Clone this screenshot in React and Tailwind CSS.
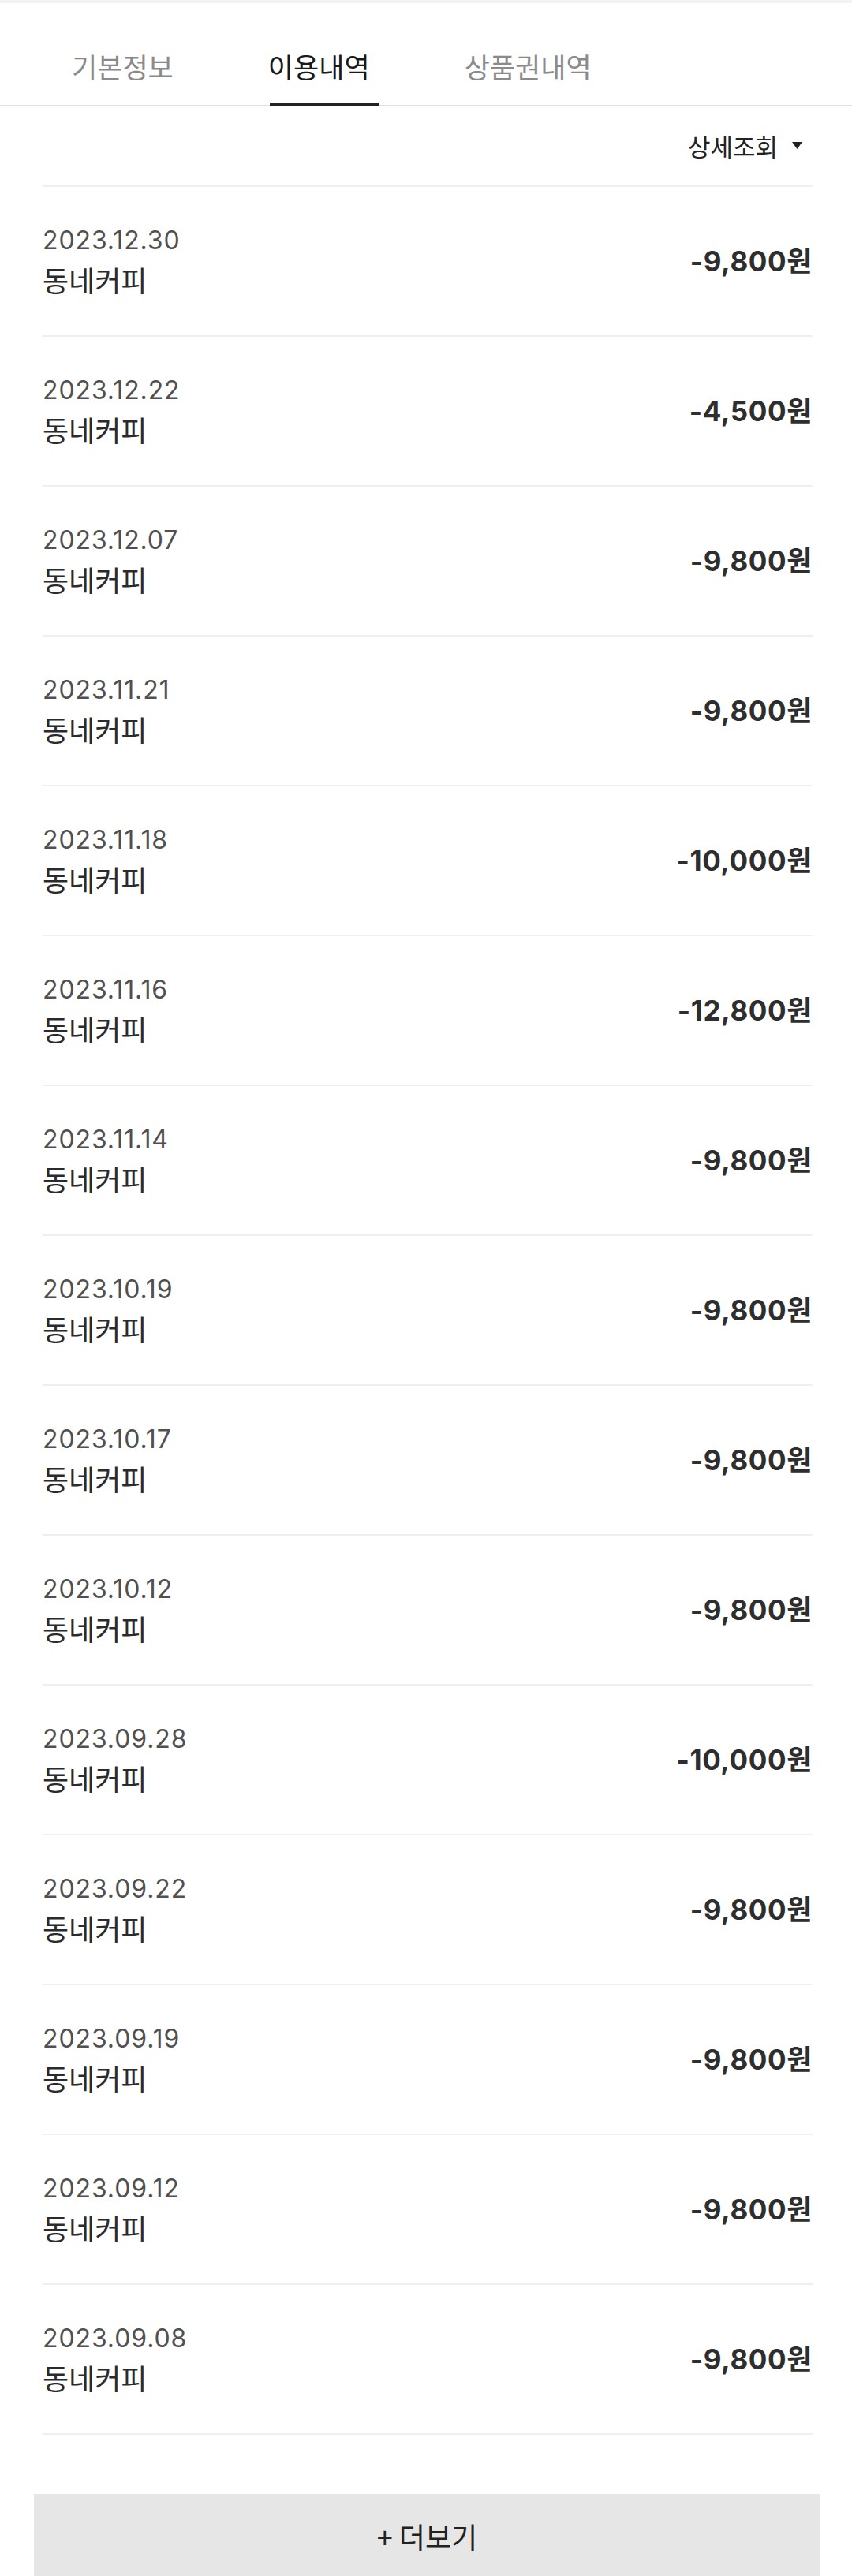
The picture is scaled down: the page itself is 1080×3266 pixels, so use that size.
import React from 'react';

const tabs = ['기본정보', '이용내역', '상품권내역'];

const history = [
  { date: '2023.12.30', store: '동네커피', amount: '-9,800원' },
  { date: '2023.12.22', store: '동네커피', amount: '-4,500원' },
  { date: '2023.12.07', store: '동네커피', amount: '-9,800원' },
  { date: '2023.11.21', store: '동네커피', amount: '-9,800원' },
  { date: '2023.11.18', store: '동네커피', amount: '-10,000원' },
  { date: '2023.11.16', store: '동네커피', amount: '-12,800원' },
  { date: '2023.11.14', store: '동네커피', amount: '-9,800원' },
  { date: '2023.10.19', store: '동네커피', amount: '-9,800원' },
  { date: '2023.10.17', store: '동네커피', amount: '-9,800원' },
  { date: '2023.10.12', store: '동네커피', amount: '-9,800원' },
  { date: '2023.09.28', store: '동네커피', amount: '-10,000원' },
  { date: '2023.09.22', store: '동네커피', amount: '-9,800원' },
  { date: '2023.09.19', store: '동네커피', amount: '-9,800원' },
  { date: '2023.09.12', store: '동네커피', amount: '-9,800원' },
  { date: '2023.09.08', store: '동네커피', amount: '-9,800원' },
];

export default function App() {
  const active = 1;

  return (
    <div className="w-[1080px] bg-white font-['Inter','Noto_Sans_CJK_KR',sans-serif]">
      <div className="h-[4px] bg-[#f3f3f3]" />

      {/* Tabs */}
      <div className="h-[131px] border-b-2 border-[#e3e3e3] flex items-start pl-[91px] gap-[120px] pt-[58px]">
        {tabs.map((tab, i) => (
          <div key={tab} className="relative h-[71px]">
            <span
              className={`block text-[35px] leading-[44px] font-['Noto_Sans_CJK_KR',sans-serif] ${
                i === active ? 'text-[#1a1a1a]' : 'text-[#8a8a8a]'
              }`}
            >
              {tab}
            </span>
            {i === active && (
              <span className="absolute left-[2px] bottom-[-2px] w-[139px] h-[5px] bg-[#222]" />
            )}
          </div>
        ))}
      </div>

      {/* Filter */}
      <div className="h-[100px] flex items-center justify-end pr-[63px]">
        <button className="flex items-center gap-[18px] text-[#222]">
          <span className="text-[31px] leading-[36px] font-['Noto_Sans_CJK_KR',sans-serif]">상세조회</span>
          <svg className="w-[13px] h-[10px]" viewBox="0 0 13 10" fill="currentColor">
            <path d="M0 0h13L6.5 9z" />
          </svg>
        </button>
      </div>

      {/* List */}
      <div className="ml-[54px] mr-[50px] border-t-2 border-[#efefef]">
        {history.map((item, i) => (
          <div
            key={i}
            className="h-[190px] border-b-2 border-[#efefef] flex items-center justify-between"
          >
            <div className="flex flex-col">
              <span className="text-[32px] leading-[40px] text-[#505050] tracking-[0.9px]">{item.date}</span>
              <span className="mt-[6px] text-[36px] leading-[46px] text-[#2b2b2b] font-['Noto_Sans_CJK_KR',sans-serif]">
                {item.store}
              </span>
            </div>
            <span className="text-[35px] leading-[40px] font-bold text-[#2e2e2e] tracking-[0.6px]">
              {item.amount}
            </span>
          </div>
        ))}
      </div>

      <div className="h-[75px]" />

      <button className="mx-[43px] w-[997px] h-[106px] bg-[#e6e6e6] flex items-center justify-center text-[36px] text-[#222] font-['Noto_Sans_CJK_KR',sans-serif]">
        + 더보기
      </button>
    </div>
  );
}
